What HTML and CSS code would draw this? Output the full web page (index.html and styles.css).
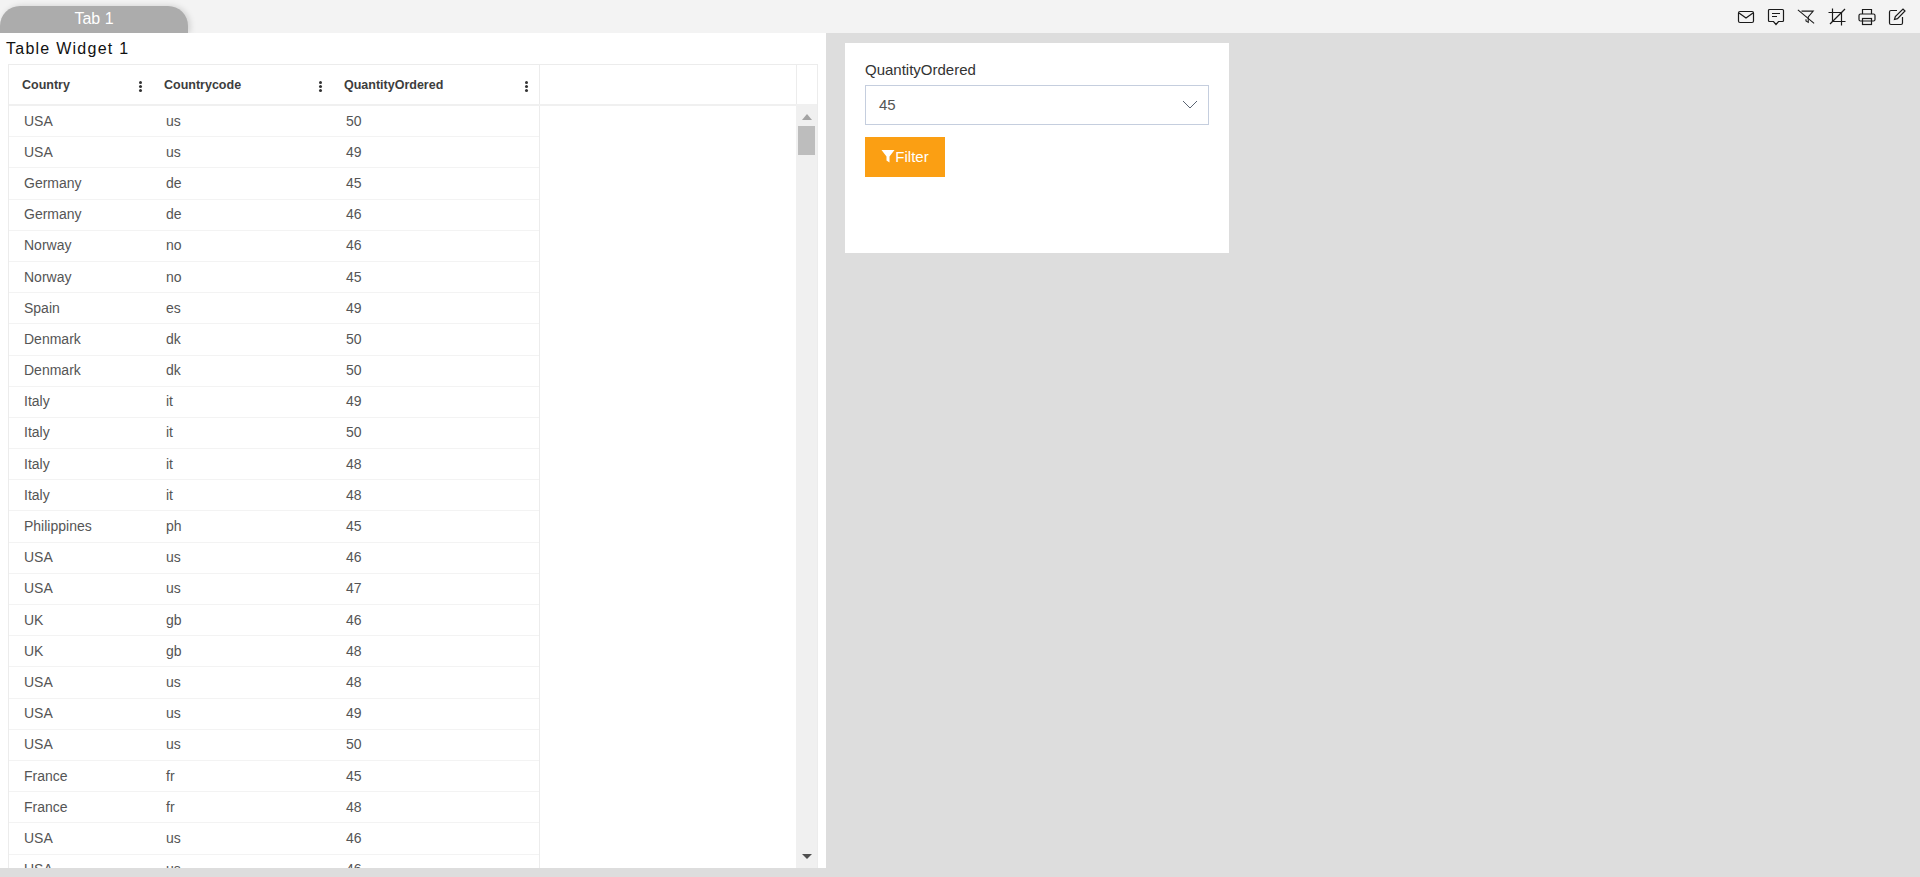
FILE: index.html
```html
<!DOCTYPE html>
<html lang="en">

<head>
  <meta charset="UTF-8" />
  <meta name="viewport" content="width=device-width, initial-scale=1.0"/>
  <title>Dashboard</title>
  <link rel="stylesheet" href="styles.css">
</head>
<body>
  <header class="topbar">
    <div class="tab">Tab 1</div>
    <div class="tools">
      <svg class="tool" viewBox="0 0 18 18"><rect x="1.500" y="3.500" width="15" height="11" rx="1.500"/><path d="M2 5l7 5 7-5"/></svg>
      <svg class="tool" viewBox="0 0 18 18"><path d="M2.500 1.500h13a1 1 0 0 1 1 1v10a1 1 0 0 1-1 1h-4l-2.500 3-2.500-3h-4a1 1 0 0 1-1-1v-10a1 1 0 0 1 1-1z"/><path d="M5 5.500h8M5 8.500h5"/></svg>
      <svg class="tool" viewBox="0 0 20 18"><path d="M5 2.500h13l-5.500 6.500v6l-2.500-1.500v-2"/><path d="M1 1l18 15"/></svg>
      <svg class="tool" viewBox="0 0 18 18"><path d="M4.500 0.500v13h13"/><path d="M0.500 4.500h13v13"/><path d="M2 16l15-15"/></svg>
      <svg class="tool" viewBox="0 0 18 18"><path d="M4.500 6v-4.500h9v4.500"/><rect x="1" y="6" width="16" height="7" rx="1.500"/><rect x="4.500" y="10.500" width="9" height="6"/></svg>
      <svg class="tool" viewBox="0 0 18 18"><path d="M9 2.500h-6a1.500 1.500 0 0 0-1.500 1.500v11a1.500 1.500 0 0 0 1.500 1.500h10a1.500 1.500 0 0 0 1.500-1.500v-6"/><path d="M6.500 11.500l.8-3 7.700-7.500 2 2-7.500 7.700z"/></svg>
    </div>
  </header>

  <main class="content">
    <section class="table-panel">
      <h2 class="widget-title">Table Widget 1</h2>
      <div class="grid">
        <div class="grid-head">
          <div class="head-cell col-country">Country<span class="dots"></span></div>
          <div class="head-cell col-code">Countrycode<span class="dots"></span></div>
          <div class="head-cell col-qty">QuantityOrdered<span class="dots"></span></div>
          <div class="head-fill"></div>
        </div>
        <div class="grid-body">
          <div class="rows" id="rows">
            <div class="row"><span class="col-country">USA</span><span class="col-code">us</span><span class="col-qty">50</span></div>
            <div class="row"><span class="col-country">USA</span><span class="col-code">us</span><span class="col-qty">49</span></div>
            <div class="row"><span class="col-country">Germany</span><span class="col-code">de</span><span class="col-qty">45</span></div>
            <div class="row"><span class="col-country">Germany</span><span class="col-code">de</span><span class="col-qty">46</span></div>
            <div class="row"><span class="col-country">Norway</span><span class="col-code">no</span><span class="col-qty">46</span></div>
            <div class="row"><span class="col-country">Norway</span><span class="col-code">no</span><span class="col-qty">45</span></div>
            <div class="row"><span class="col-country">Spain</span><span class="col-code">es</span><span class="col-qty">49</span></div>
            <div class="row"><span class="col-country">Denmark</span><span class="col-code">dk</span><span class="col-qty">50</span></div>
            <div class="row"><span class="col-country">Denmark</span><span class="col-code">dk</span><span class="col-qty">50</span></div>
            <div class="row"><span class="col-country">Italy</span><span class="col-code">it</span><span class="col-qty">49</span></div>
            <div class="row"><span class="col-country">Italy</span><span class="col-code">it</span><span class="col-qty">50</span></div>
            <div class="row"><span class="col-country">Italy</span><span class="col-code">it</span><span class="col-qty">48</span></div>
            <div class="row"><span class="col-country">Italy</span><span class="col-code">it</span><span class="col-qty">48</span></div>
            <div class="row"><span class="col-country">Philippines</span><span class="col-code">ph</span><span class="col-qty">45</span></div>
            <div class="row"><span class="col-country">USA</span><span class="col-code">us</span><span class="col-qty">46</span></div>
            <div class="row"><span class="col-country">USA</span><span class="col-code">us</span><span class="col-qty">47</span></div>
            <div class="row"><span class="col-country">UK</span><span class="col-code">gb</span><span class="col-qty">46</span></div>
            <div class="row"><span class="col-country">UK</span><span class="col-code">gb</span><span class="col-qty">48</span></div>
            <div class="row"><span class="col-country">USA</span><span class="col-code">us</span><span class="col-qty">48</span></div>
            <div class="row"><span class="col-country">USA</span><span class="col-code">us</span><span class="col-qty">49</span></div>
            <div class="row"><span class="col-country">USA</span><span class="col-code">us</span><span class="col-qty">50</span></div>
            <div class="row"><span class="col-country">France</span><span class="col-code">fr</span><span class="col-qty">45</span></div>
            <div class="row"><span class="col-country">France</span><span class="col-code">fr</span><span class="col-qty">48</span></div>
            <div class="row"><span class="col-country">USA</span><span class="col-code">us</span><span class="col-qty">46</span></div>
            <div class="row"><span class="col-country">USA</span><span class="col-code">us</span><span class="col-qty">46</span></div>
          </div>
          <div class="scrollbar">
            <span class="arrow-up"></span>
            <span class="thumb"></span>
            <span class="arrow-down"></span>
          </div>
        </div>
      </div>
    </section>

    <section class="filter-card">
      <label class="filter-label">QuantityOrdered</label>
      <div class="select">
        <span>45</span>
        <svg class="chevron" viewBox="0 0 16 9"><path d="M1 1l7 7 7-7"/></svg>
      </div>
      <button class="filter-btn"><svg class="funnel" viewBox="0 0 14 14"><path d="M0.500 1h13l-5 6.500v6l-3-2v-4z"/></svg>Filter</button>
    </section>
  </main>
</body>
</html>
```

FILE: styles.css
```css
* {
  margin: 0;
  padding: 0;
  box-sizing: border-box;
  font-family: 'Liberation Sans', Arial, sans-serif;
}

html, body {
  height: 877px;
  overflow: hidden;
}

body {
  background: #dddddd;
  display: flex;
  flex-direction: column;
}

.topbar {
  height: 33px;
  background: #f3f3f3;
  display: flex;
  justify-content: space-between;
  align-items: flex-end;
  padding-right: 14px;
}

.tab {
  width: 188px;
  height: 27px;
  background: #acacac;
  border-radius: 20px 20px 0 0;
  box-shadow: 2px 0 6px rgba(0, 0, 0, 0.15);
  color: white;
  font-size: 16px;
  line-height: 26px;
  text-align: center;
}

.tools {
  display: flex;
  align-self: center;
  gap: 12.2px;
}

.tool {
  width: 18px;
  height: 18px;
  fill: none;
  stroke: #1a1a1a;
  stroke-width: 1.2;
}

.content {
  flex: 1;
  display: flex;
  align-items: flex-start;
}

.table-panel {
  width: 826px;
  height: 835px;
  background: white;
  display: flex;
  flex-direction: column;
}

.widget-title {
  font-size: 16px;
  font-weight: normal;
  letter-spacing: 1.25px;
  color: #111;
  line-height: 20px;
  padding: 6px 0 0 6px;
  height: 31px;
}

.grid {
  margin-left: 8px;
  width: 810px;
  flex: 1;
  min-height: 0;
  border: 1px solid #ececec;
  border-bottom: none;
  display: flex;
  flex-direction: column;
}

.grid-head {
  height: 41px;
  display: flex;
  flex-shrink: 0;
  border-bottom: 2px solid #f0f0f0;
  font-size: 12.5px;
  font-weight: bold;
  color: #3d3d3d;
}

.head-cell {
  position: relative;
  line-height: 40px;
  padding-left: 13px;
}

.head-fill {
  width: 258px;
  border-left: 1px solid #ececec;
  border-right: 1px solid #ececec;
}

.col-country {
  width: 142px;
}

.col-code {
  width: 180px;
}

.col-qty {
  width: 208px;
}

.dots {
  position: absolute;
  right: 9px;
  top: 16px;
  width: 3px;
  height: 3px;
  border-radius: 50%;
  background: #333;
  box-shadow: 0 4px 0 #333, 0 8px 0 #333;
}

.col-qty .dots {
  right: 11px;
}

.grid-body {
  flex: 1;
  min-height: 0;
  display: flex;
  justify-content: space-between;
}

.rows {
  width: 531px;
  overflow: hidden;
  border-right: 1px solid #ececec;
}

.row {
  height: 31.2px;
  display: flex;
  align-items: center;
  padding-bottom: 1px;
  border-bottom: 1px solid #f3f3f3;
  font-size: 14px;
  color: #555;
}

.row span {
  padding-left: 15px;
}

.scrollbar {
  width: 21px;
  background: #f0f0f0;
  display: flex;
  flex-direction: column;
  align-items: center;
  padding-top: 8px;
}

.arrow-up {
  width: 0;
  height: 0;
  border-left: 5px solid transparent;
  border-right: 5px solid transparent;
  border-bottom: 6px solid #a3a3a3;
}

.thumb {
  width: 17px;
  height: 29px;
  margin-top: 6px;
  background: #bdbdbd;
}

.arrow-down {
  margin-top: auto;
  margin-bottom: 9px;
  width: 0;
  height: 0;
  border-left: 5px solid transparent;
  border-right: 5px solid transparent;
  border-top: 5px solid #505050;
}

.filter-card {
  width: 384px;
  height: 210px;
  margin: 10px 0 0 19px;
  background: white;
  padding: 17px 20px 0;
}

.filter-label {
  display: block;
  font-size: 15px;
  line-height: 20px;
  color: #333;
  margin-bottom: 5px;
}

.select {
  height: 40px;
  border: 1px solid #c5cede;
  display: flex;
  justify-content: space-between;
  align-items: center;
  padding: 0 10px 2px 13px;
  font-size: 15px;
  color: #555;
}

.chevron {
  width: 16px;
  height: 9px;
  fill: none;
  stroke: #5b6472;
  stroke-width: 1;
}

.filter-btn {
  margin-top: 12px;
  width: 80px;
  height: 40px;
  border: none;
  padding-bottom: 2px;
  background: #fb9f13;
  color: white;
  font-size: 15px;
  display: flex;
  align-items: center;
  justify-content: center;
}

.funnel {
  width: 14px;
  height: 14px;
  fill: white;
}
```
